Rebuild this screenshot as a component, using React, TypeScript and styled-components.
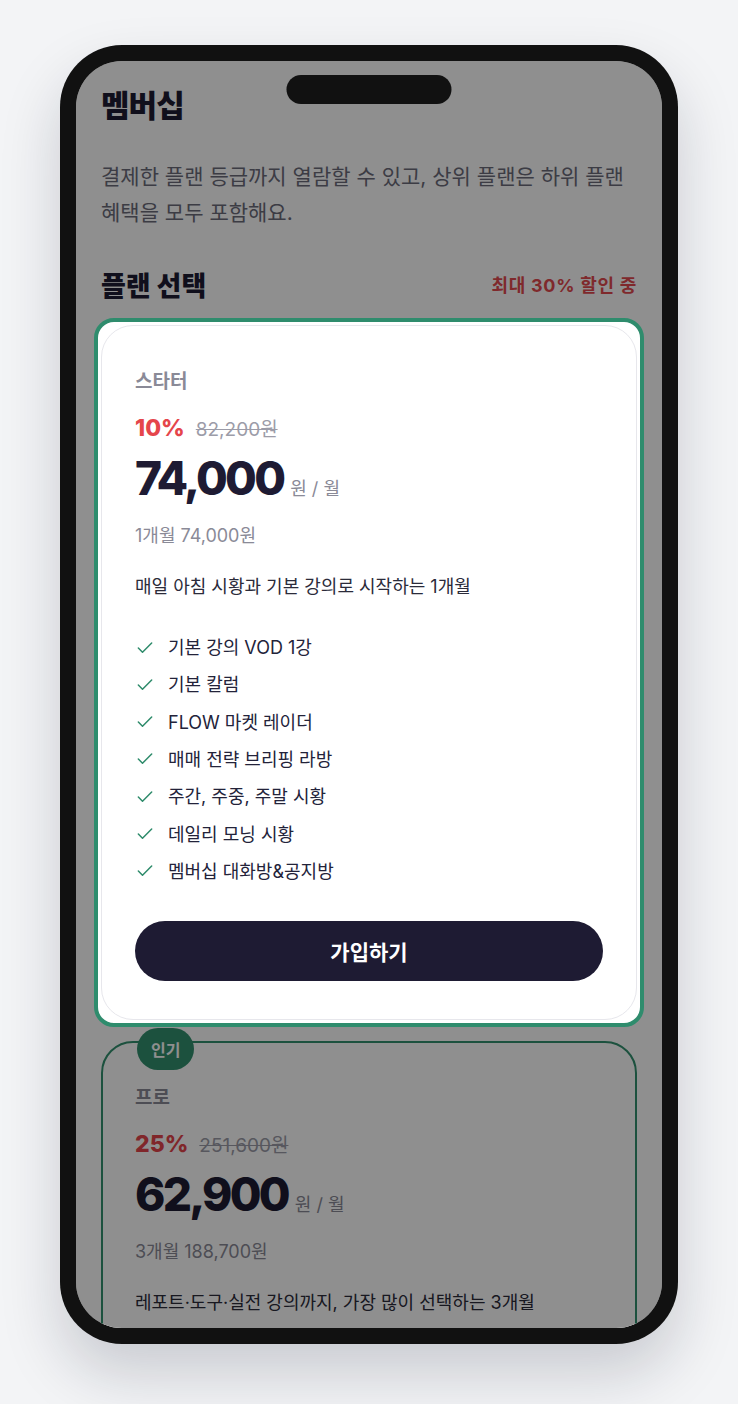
import React from "react";
import styled, { createGlobalStyle } from "styled-components";
import { Check } from "lucide-react";

const GlobalStyle = createGlobalStyle`
  html, body {
    margin: 0;
    padding: 0;
    background: #f3f4f6;
  }
  body {
    font-family: Inter, "Noto Sans CJK KR", sans-serif;
    -webkit-font-smoothing: antialiased;
  }
`;

const Stage = styled.div`
  width: 738px;
  height: 1404px;
  box-sizing: border-box;
  padding-top: 45px;
  display: flex;
  justify-content: center;
  overflow: hidden;
`;

const Phone = styled.div`
  width: 618px;
  height: 1299px;
  box-sizing: border-box;
  padding: 16px;
  background: #111111;
  border-radius: 62px;
  box-shadow: 0 30px 60px rgba(15, 23, 42, 0.18);
`;

const Screen = styled.div`
  position: relative;
  height: 100%;
  border-radius: 46px;
  overflow: hidden;
  background: #ffffff;
`;

const Notch = styled.div`
  position: absolute;
  top: 14px;
  left: 50%;
  transform: translateX(-50%);
  width: 165px;
  height: 29px;
  border-radius: 15px;
  background: #111111;
  z-index: 5;
`;

const Dim = styled.div`
  position: absolute;
  inset: 0;
  background: rgba(0, 0, 0, 0.44);
  z-index: 1;
`;

const Content = styled.div`
  padding: 25px 25px 40px;
  display: flex;
  flex-direction: column;
`;

const Title = styled.h1`
  margin: 0;
  font-size: 31px;
  line-height: 40px;
  font-weight: 800;
  letter-spacing: -0.03em;
  color: #1e1b33;
`;

const Lead = styled.p`
  margin: 33px 0 0;
  font-size: 21px;
  line-height: 36px;
  color: #6b6b7a;
  word-break: keep-all;
`;

const SectionHead = styled.div`
  margin-top: 35px;
  display: flex;
  align-items: center;
  justify-content: space-between;
  height: 36px;
`;

const SectionTitle = styled.h2`
  margin: 0;
  font-size: 27px;
  font-weight: 800;
  color: #1e1b33;
`;

const SaleNote = styled.span`
  font-size: 18px;
  font-weight: 700;
  letter-spacing: 0.04em;
  color: #e34a4f;
`;

const Spotlight = styled.div`
  position: relative;
  z-index: 2;
  margin: 16px -7px 0;
  padding: 3px;
  border: 4px solid #2f8c6d;
  border-radius: 20px;
  background: #ffffff;
`;

const Card = styled.div<{ $popular?: boolean }>`
  position: relative;
  margin-top: ${(p) => (p.$popular ? "14px" : "0")};
  border: ${(p) => (p.$popular ? "2px solid #33916f" : "1px solid #e7e7ec")};
  border-radius: 32px;
  background: #ffffff;
  padding: ${(p) => (p.$popular ? "42px 32px 38px" : "43px 33px 38px")};
  display: flex;
  flex-direction: column;
`;

const Badge = styled.span`
  position: absolute;
  top: -15px;
  left: 34px;
  height: 42px;
  padding: 0 14px;
  border-radius: 21px;
  background: #33916f;
  color: #ffffff;
  font-size: 16px;
  font-weight: 700;
  display: flex;
  align-items: center;
`;

const PlanName = styled.div`
  font-size: 19px;
  line-height: 26px;
  font-weight: 700;
  color: #8a8a97;
`;

const DiscountRow = styled.div`
  margin-top: 19px;
  height: 28px;
  display: flex;
  align-items: baseline;
  gap: 11px;
`;

const Rate = styled.span`
  font-size: 23px;
  line-height: 28px;
  font-weight: 800;
  color: #e5454b;
`;

const Original = styled.span`
  font-size: 19px;
  color: #9c9ca8;
  text-decoration: line-through;
`;

const PriceRow = styled.div`
  margin-top: 8px;
  display: flex;
  align-items: baseline;
  gap: 7px;
`;

const Amount = styled.span`
  font-size: 46px;
  line-height: 56px;
  font-weight: 800;
  letter-spacing: -0.06em;
  color: #1e1b33;
`;

const Unit = styled.span`
  font-size: 18px;
  color: #8a8a97;
`;

const Total = styled.div`
  margin-top: 18px;
  font-size: 18px;
  line-height: 24px;
  color: #8a8a97;
`;

const Summary = styled.p`
  margin: 27px 0 0;
  font-size: 18px;
  line-height: 24px;
  color: #2b2b3a;
`;

const Features = styled.ul`
  list-style: none;
  margin: 36px 0 0;
  padding: 0;
  display: flex;
  flex-direction: column;
  gap: 12.33px;
`;

const Feature = styled.li`
  display: flex;
  align-items: center;
  gap: 13px;
  font-size: 18px;
  line-height: 25px;
  color: #23233a;
`;

const JoinButton = styled.button`
  margin-top: 37px;
  height: 60px;
  border: none;
  border-radius: 30px;
  background: #1e1b33;
  color: #ffffff;
  font-family: inherit;
  font-size: 21px;
  font-weight: 700;
  cursor: pointer;
`;

type Plan = {
  name: string;
  rate: string;
  original: string;
  amount: string;
  total: string;
  summary: string;
  features: string[];
};

const plans: Plan[] = [
  {
    name: "스타터",
    rate: "10%",
    original: "82,200원",
    amount: "74,000",
    total: "1개월 74,000원",
    summary: "매일 아침 시황과 기본 강의로 시작하는 1개월",
    features: [
      "기본 강의 VOD 1강",
      "기본 칼럼",
      "FLOW 마켓 레이더",
      "매매 전략 브리핑 라방",
      "주간, 주중, 주말 시황",
      "데일리 모닝 시황",
      "멤버십 대화방&공지방",
    ],
  },
  {
    name: "프로",
    rate: "25%",
    original: "251,600원",
    amount: "62,900",
    total: "3개월 188,700원",
    summary: "레포트·도구·실전 강의까지, 가장 많이 선택하는 3개월",
    features: ["스타터 혜택 모두 포함", "주간 레포트", "실전 매매 도구"],
  },
];

const PlanBody: React.FC<{ plan: Plan }> = ({ plan }) => (
  <>
    <PlanName>{plan.name}</PlanName>
    <DiscountRow>
      <Rate>{plan.rate}</Rate>
      <Original>{plan.original}</Original>
    </DiscountRow>
    <PriceRow>
      <Amount>{plan.amount}</Amount>
      <Unit>원 / 월</Unit>
    </PriceRow>
    <Total>{plan.total}</Total>
    <Summary>{plan.summary}</Summary>
    <Features>
      {plan.features.map((f) => (
        <Feature key={f}>
          <Check size={20} strokeWidth={1.8} color="#2e8b6b" />
          {f}
        </Feature>
      ))}
    </Features>
    <JoinButton>가입하기</JoinButton>
  </>
);

export default function App() {
  const [starter, pro] = plans;
  return (
    <>
      <GlobalStyle />
      <Stage>
        <Phone>
          <Screen>
            <Notch />
            <Dim />
            <Content>
              <Title>멤버십</Title>
              <Lead>
                결제한 플랜 등급까지 열람할 수 있고, 상위 플랜은 하위 플랜 혜택을
                모두 포함해요.
              </Lead>
              <SectionHead>
                <SectionTitle>플랜 선택</SectionTitle>
                <SaleNote>최대 30% 할인 중</SaleNote>
              </SectionHead>
              <Spotlight>
                <Card>
                  <PlanBody plan={starter} />
                </Card>
              </Spotlight>
              <Card $popular>
                <Badge>인기</Badge>
                <PlanBody plan={pro} />
              </Card>
            </Content>
          </Screen>
        </Phone>
      </Stage>
    </>
  );
}
